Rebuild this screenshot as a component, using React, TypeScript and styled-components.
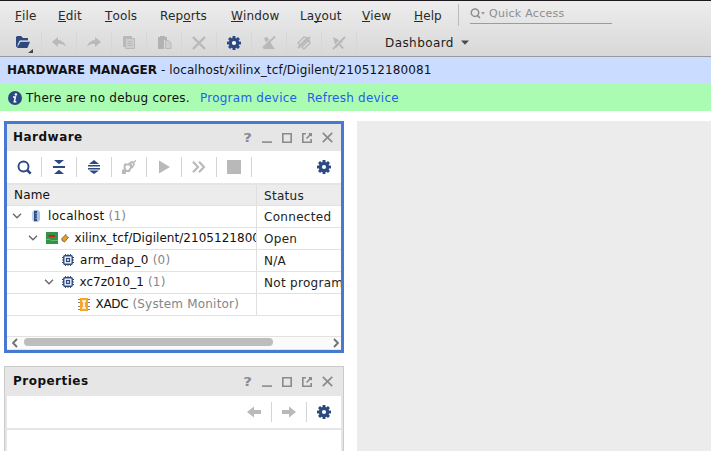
import React from 'react';
import styled, { createGlobalStyle } from 'styled-components';

const NAVY = '#2c4a80';
const FAINT = '#b9b9b9';

const GlobalStyle = createGlobalStyle`
  * { box-sizing: border-box; }
  html, body { margin: 0; padding: 0; overflow: hidden; background: #fff; }
  body {
    font-family: "DejaVu Sans", Verdana, sans-serif;
    font-size: 12px;
    color: #111;
    white-space: pre;
  }
  svg { display: block; flex: none; }
`;

const Window = styled.div`
  width: 711px;
  height: 451px;
  overflow: hidden;
  display: flex;
  flex-direction: column;
`;

const TopChrome = styled.header`
  height: 57px;
  flex: none;
  border-top: 1px solid #1d191c;
  border-bottom: 1px solid #999;
  background: linear-gradient(#ededed, #d8d8d8);
`;

const MenuBar = styled.nav`
  height: 29px;
  display: flex;
  align-items: flex-start;
  padding-left: 15px;
  letter-spacing: 0.12px;
`;

const MenuItem = styled.span<{ $width: number }>`
  width: ${p => p.$width}px;
  flex: none;
  line-height: 16px;
  padding-top: 7px;
  color: #292929;
`;

const Mnemonic = styled.span`
  display: inline-block;
  height: 14px;
  line-height: 16px;
  border-bottom: 1px solid #292929;
`;

const MenuDivider = styled.span`
  width: 1px;
  height: 22px;
  margin-top: 3px;
  background: #bcbcbc;
`;

const QuickAccess = styled.div`
  width: 142px;
  height: 20px;
  margin: 3px 0 0 11px;
  display: flex;
  align-items: center;
  gap: 4px;
  border-bottom: 1px solid #9c9c9c;
  color: #8d8d8d;
  font-size: 11px;
  letter-spacing: 0.27px;
`;

const ToolStrip = styled.div`
  height: 25px;
  padding-left: 7px;
  display: flex;
  align-items: center;
`;

const ToolCell = styled.span<{ $line?: string; $tall?: boolean }>`
  width: 35px;
  height: ${p => (p.$tall ? 22 : 20)}px;
  flex: none;
  display: flex;
  align-items: center;
  justify-content: center;
  border-right: 1px solid ${p => p.$line ?? '#d4d4d4'};
`;

const GearCell = styled.span`
  width: 34px;
  flex: none;
  display: flex;
  justify-content: center;
`;

const LayoutChooser = styled.div`
  display: flex;
  align-items: center;
  gap: 7px;
  margin-left: 28px;
  letter-spacing: 0.42px;
  color: #1c1c1c;
`;

const ManagerBar = styled.div`
  height: 27px;
  flex: none;
  padding: 0 7px;
  line-height: 26px;
  letter-spacing: 0.11px;
  background: #cadcff;
`;

const ManagerName = styled.b`
  letter-spacing: 0;
`;

const NoticeBar = styled.div`
  height: 27px;
  flex: none;
  display: flex;
  align-items: center;
  padding-left: 8px;
  letter-spacing: 0.24px;
  background: #aafcb2;
`;

const NoticeText = styled.span`
  width: 174px;
  margin-left: 4px;
`;

const NoticeLink = styled.a<{ $width: number }>`
  width: ${p => p.$width}px;
  color: #2360ea;
`;

const Workspace = styled.main`
  flex: 1;
  min-height: 0;
  display: flex;
  gap: 13px;
  padding: 10px 0 0 4px;
`;

const Sidebar = styled.div`
  width: 340px;
  flex: none;
  display: flex;
  flex-direction: column;
  gap: 13px;
`;

const Canvas = styled.section`
  flex: 1;
  background: #ececec;
`;

const Panel = styled.section<{ $active?: boolean }>`
  flex: none;
  height: ${p => (p.$active ? 232 : 130)}px;
  border: ${p => (p.$active ? '3px solid #4679cf' : '1px solid #cacaca')};
  padding: ${p => (p.$active ? 0 : '0 2px')};
  background: ${p => (p.$active ? '#fff' : '#e6e6e6')};
  display: flex;
  flex-direction: column;
`;

const PanelHeader = styled.div<{ $height: number }>`
  height: ${p => p.$height}px;
  flex: none;
  display: flex;
  align-items: center;
  padding: 0 4px 0 6px;
  background: #e6e6e6;
`;

const PanelTitle = styled.strong`
  flex: 1;
  padding-bottom: 2px;
  letter-spacing: 0.48px;
`;

const TitleButton = styled.span`
  width: 20px;
  display: flex;
  justify-content: center;
`;

const PanelTools = styled.div<{ $end?: boolean }>`
  height: 34px;
  flex: none;
  display: flex;
  align-items: center;
  justify-content: ${p => (p.$end ? 'flex-end' : 'flex-start')};
  background: #fff;
  border-bottom: 2px solid #e5e5e5;
`;

const Spacer = styled.span`
  flex: 1;
`;

const PanelBody = styled.div`
  flex: 1;
  background: #fff;
`;

const TreeRow = styled.div<{ $head?: boolean }>`
  height: ${p => (p.$head ? 21 : 22)}px;
  flex: none;
  display: grid;
  grid-template-columns: 250px 84px;
  background: ${p => (p.$head ? '#ececec' : '#fff')};
  border-bottom: 1px solid #e2e2e2;
`;

const NameCell = styled.div<{ $indent: number; $tracking: number }>`
  display: flex;
  align-items: center;
  overflow: hidden;
  padding: 0 0 1px ${p => p.$indent}px;
  border-right: 1px solid #dfdfdf;
  letter-spacing: ${p => p.$tracking}px;
`;

const StatusCell = styled.div`
  overflow: hidden;
  padding: 1px 0 0 7px;
  line-height: 20px;
  letter-spacing: 0.3px;
  color: #222;
`;

const Twisty = styled.span<{ $space: number }>`
  width: ${p => p.$space}px;
  flex: none;
`;

const NodeIcon = styled.span<{ $space: number }>`
  width: ${p => p.$space}px;
  flex: none;
  display: flex;
  align-items: center;
  gap: 3px;
`;

const Muted = styled.span`
  color: #858585;
  letter-spacing: 0.2px;
`;

const EmptyRow = styled.div`
  height: 21px;
  flex: none;
  border-bottom: 1px solid #e2e2e2;
`;

const ScrollTrack = styled.div`
  height: 13px;
  display: flex;
  align-items: center;
  padding: 0 2px 0 5px;
  background: #fafafa;
  border-bottom: 1px solid #e6e6e6;
`;

const ScrollThumb = styled.div`
  width: 249px;
  height: 8px;
  margin: -2px auto 0 6px;
  border-radius: 4px;
  background: #bdbdbd;
`;

const Gear = () => (
  <svg width="14" height="14" viewBox="0 0 14 14">
    <g fill={NAVY}>
      {[0, 45, 90, 135].map(a => (
        <rect key={a} x="5.5" y="0" width="3" height="14" rx=".5" transform={`rotate(${a} 7 7)`} />
      ))}
      <circle cx="7" cy="7" r="5.2" />
    </g>
    <circle cx="7" cy="7" r="2.1" fill="#fff" />
  </svg>
);

const OpenFolder = () => (
  <svg width="18" height="20" viewBox="0 0 18 20">
    <path d="M1 14V4.5Q1 3 2.5 3H6l2 2h5v3H5.2L3 13.5Z" fill={NAVY} />
    <path d="M5.5 8.7H15L12.4 15H2Z" fill={NAVY} />
    <path d="M2.8 12.5 4.8 7.9H13" fill="none" stroke="#dedede" />
    <path d="M18 16v4h-5Z" fill="#444" />
  </svg>
);

const Redo = ({ back }: { back?: boolean }) => (
  <svg width="14" height="11" viewBox="0 0 14 11">
    <path transform={back ? 'matrix(-1 0 0 1 14 0)' : undefined} fill={FAINT}
      d="M8 0l6 5-6 5V7Q4 5.8 0 9.5 2 3.5 8 3Z" />
  </svg>
);

const CopyPages = () => (
  <svg width="14" height="15" viewBox="0 0 14 15">
    <path d="M1 1h9v3H4v8H1Z" fill={FAINT} />
    <path d="M3.5 3.5h9v10h-9Z" fill="#cecece" stroke={FAINT} />
    <path d="M5.5 6.5h5M5.5 8.5h5M5.5 10.5h5" stroke={FAINT} />
  </svg>
);

const Paste = () => (
  <svg width="15" height="15" viewBox="0 0 15 15">
    <path d="M1 2h2V1h5v1h2v3H7v9H1Z" fill="#b2b2b2" />
    <path d="M8.5 5.5h3l2.5 2.5v5.5H8.5Z" fill="#cecece" stroke={FAINT} />
  </svg>
);

const Cross = ({ size, color, weight }: { size: number; color: string; weight: number }) => (
  <svg width={size} height={size} viewBox="0 0 14 14">
    <path d="m1 1 12 12M13 1 1 13" stroke={color} strokeWidth={weight} />
  </svg>
);

const DisabledEdit = () => (
  <svg width="14" height="14" viewBox="0 0 14 14" fill={FAINT}>
    <path d="M2 2l3-1 3 4 2 4 3 4H1l2-3 2-1Z" />
    <path d="M1 11.5 13 .5" stroke={FAINT} strokeWidth="2" />
    <path d="M1 9.5 11 .5" stroke="#ddd" />
  </svg>
);

const DisabledTag = () => (
  <svg width="14" height="14" viewBox="0 0 14 14" fill="none" stroke={FAINT}>
    <path d="M1 7 7 1l3 1-7 7ZM5 11l7-7 1 3-6 6Z" strokeWidth="1.4" />
    <path d="M1 12 13 1" strokeWidth="2" />
  </svg>
);

const DisabledPointer = () => (
  <svg width="14" height="14" viewBox="0 0 14 14" fill={FAINT}>
    <path d="M1 1l10 5-3 1.5L12 12l-2 1-3-4-3 3Z" />
    <path d="M1 13 13 1" stroke={FAINT} strokeWidth="2" />
    <path d="M1 11 11 1" stroke="#ddd" />
  </svg>
);

const Magnifier = () => (
  <svg width="15" height="15" viewBox="0 0 15 15" fill="none" stroke={NAVY}>
    <circle cx="6.5" cy="6.5" r="5" strokeWidth="1.9" />
    <path d="m10 10 3.7 3.7" strokeWidth="2.5" />
  </svg>
);

const FilterGlyph = () => (
  <svg width="15" height="11" viewBox="0 0 15 11" fill="none" stroke="#8d8d8d">
    <circle cx="5" cy="4.7" r="3.7" strokeWidth="1.5" />
    <path d="m7 7 3 3" strokeWidth="1.7" />
    <path d="M11 4.2h4L13 6.5Z" fill="#8d8d8d" stroke="none" />
  </svg>
);

const CollapseAll = () => (
  <svg width="12" height="14" viewBox="0 0 12 14" fill={NAVY}>
    <path d="M1 0h10L6 4.3ZM0 6h12v2H0ZM6 9.7l5 4.3H1Z" />
  </svg>
);

const ExpandAll = () => (
  <svg width="12" height="14" viewBox="0 0 12 14" fill={NAVY}>
    <path d="M6 0l5 4H1ZM0 5h12v1.5H0ZM0 8h12v1.5H0ZM1 10.5h10L6 14Z" />
  </svg>
);

const Connect = () => (
  <svg width="14" height="14" viewBox="0 0 14 14" fill="none" stroke={FAINT}>
    <path d="M3 4.5h6v3l-2 3.5H4L2.5 8Z" strokeWidth="2" />
    <path d="M6.5 4 10 1.8 12.2 4 9.8 8M11.5 2.5 14 .5" strokeWidth="1.5" />
    <path d="M0 9.5h4V14H0Z" fill={FAINT} stroke="none" />
  </svg>
);

const Play = () => (
  <svg width="12" height="14" viewBox="0 0 12 14">
    <path d="M1 0.5v13L12 7Z" fill={FAINT} />
  </svg>
);

const FastForward = () => (
  <svg width="14" height="12" viewBox="0 0 14 12" fill="none" stroke={FAINT} strokeWidth="2.1">
    <path d="m1 .8 5 5.2-5 5.2M7 .8l5 5.2-5 5.2" />
  </svg>
);

const Stop = () => (
  <svg width="14" height="14" viewBox="0 0 14 14">
    <path d="M0 0h14v14H0Z" fill={FAINT} />
  </svg>
);

const StepArrow = ({ back }: { back?: boolean }) => (
  <svg width="14" height="12" viewBox="0 0 14 12">
    <path transform={back ? 'matrix(-1 0 0 1 14 0)' : undefined} d="M0 4h7V.5L14 6l-7 5.5V8H0Z" fill={FAINT} />
  </svg>
);

const HelpMark = styled.b`
  font-size: 12px;
  line-height: 16px;
  color: #8b8b8b;
  transform: scaleX(1.25);
`;

const WindowGlyph = ({ path }: { path: string }) => (
  <svg width="10" height="10" viewBox="0 0 10 10">
    <path d={path} fill="none" stroke="#8b8b8b" strokeWidth="1.6" />
  </svg>
);

const TitleButtons = () => (
  <>
    <TitleButton><HelpMark>?</HelpMark></TitleButton>
    <TitleButton><WindowGlyph path="M0 9.1h10" /></TitleButton>
    <TitleButton><WindowGlyph path="M.8.8h8.4v8.4H.8Z" /></TitleButton>
    <TitleButton><WindowGlyph path="M4 .8H.8v8.4h8.4V6M4.5 5.5 9.3.7M6.8.8h2.4v2.4" /></TitleButton>
    <TitleButton><Cross size={11} color="#8b8b8b" weight={2.2} /></TitleButton>
  </>
);

const Chevron = () => (
  <svg width="10" height="6" viewBox="0 0 10 6">
    <path d="m1 .8 4 4 4-4" fill="none" stroke="#666" strokeWidth="1.3" />
  </svg>
);

const HostIcon = () => (
  <svg width="8" height="12" viewBox="0 0 8 12">
    <path d="M0 2 2 0v12L0 10Z" fill="#c4d3e9" />
    <path d="M2 0h4l2 2v8l-2 2H2Z" fill="#a9c1e4" />
    <path d="M2 1h3v10H2Z" fill={NAVY} />
    <path d="M3.5 3.5h1.5M3.5 6h1.5M3.5 8.5h1.5" stroke="#8ba7d2" />
  </svg>
);

const BoardIcon = () => (
  <svg width="12" height="12" viewBox="0 0 12 12">
    <path d="M0 0h12v12H0Z" fill="#329545" />
    <path d="M2.5 3H9v2H2.5Z" fill="#c81f24" />
    <path d="M0 7.5h4l1 1h7" fill="none" stroke="#65b46f" />
  </svg>
);

const PlugIcon = () => (
  <svg width="8" height="9" viewBox="0 0 9 10">
    <path d="M1 5 5 1l3 3-4 5-3-2Z" fill="#ed9e1c" stroke="#6e603f" />
    <path d="m5 1 1-1M8 4l1-1" stroke="#555" />
  </svg>
);

const ChipIcon = () => (
  <svg width="12" height="12" viewBox="0 0 12 12" fill="none" stroke={NAVY}>
    <path d="M3.5 0v2M6 0v2M8.5 0v2M3.5 10v2M6 10v2M8.5 10v2M0 3.5h2M0 6h2M0 8.5h2M10 3.5h2M10 6h2M10 8.5h2" />
    <rect x="1.8" y="1.8" width="8.4" height="8.4" rx="1" strokeWidth="1.4" />
    <rect x="4.5" y="4.5" width="3" height="3" strokeWidth="1.3" />
  </svg>
);

const MonitorIcon = () => (
  <svg width="12" height="13" viewBox="0 0 12 13">
    <path d="M0 1.5h12M0 4.5h12M0 8.5h12M0 11.5h12" stroke="#8a8170" />
    <path d="M2 0h8v13H2Z" fill="#f7a62d" />
    <path d="M4 3h4M4 10h4M6 3v7" stroke="#fff" strokeWidth="1.7" />
  </svg>
);

const InfoIcon = () => (
  <svg width="14" height="14" viewBox="0 0 14 14">
    <circle cx="7" cy="7" r="7" fill={NAVY} />
    <circle cx="7.9" cy="3.5" r="1.2" fill="#fff" />
    <path d="M5 6h2.4L6.3 10.8h2" fill="none" stroke="#fff" strokeWidth="1.5" />
  </svg>
);

const ScrollArrow = ({ right }: { right?: boolean }) => (
  <svg width="6" height="10" viewBox="0 0 6 10">
    <path d={right ? 'm1 1 4 4-4 4' : 'M5 1 1 5l4 4'} fill="none" stroke="#707070" strokeWidth="1.9" />
  </svg>
);

const menus: [string, string, string, number][] = [
  ['', 'F', 'ile', 43], ['', 'E', 'dit', 47], ['', 'T', 'ools', 55], ['Rep', 'o', 'rts', 71],
  ['', 'W', 'indow', 69], ['La', 'y', 'out', 62], ['', 'V', 'iew', 52], ['', 'H', 'elp', 44],
];

const mainTools = [
  <OpenFolder />, <Redo back />, <Redo />, <CopyPages />, <Paste />,
  <Cross size={14} color={FAINT} weight={2.4} />, <Gear />, <DisabledEdit />, <DisabledTag />, <DisabledPointer />,
];

const hardwareTools = [<Magnifier />, <CollapseAll />, <ExpandAll />, <Connect />, <Play />, <FastForward />, <Stop />];

type Node = {
  indent: number; open?: boolean; twisty: number; icon: React.ReactNode; space: number;
  name: string; tracking: number; note?: string; status: string;
};

const nodes: Node[] = [
  { indent: 5, open: true, twisty: 20, icon: <HostIcon />, space: 16, name: 'localhost', tracking: 0.3, note: '(1)', status: 'Connected' },
  { indent: 21, open: true, twisty: 18, icon: <><BoardIcon /><PlugIcon /></>, space: 28.5, name: 'xilinx_tcf/Digilent/210512180081', tracking: 0.04, status: 'Open' },
  { indent: 37, twisty: 18, icon: <ChipIcon />, space: 18, name: 'arm_dap_0', tracking: 0.3, note: '(0)', status: 'N/A' },
  { indent: 37, open: true, twisty: 18, icon: <ChipIcon />, space: 17.5, name: 'xc7z010_1', tracking: 0.05, note: '(1)', status: 'Not programmed' },
  { indent: 53, twisty: 18, icon: <MonitorIcon />, space: 17.5, name: 'XADC', tracking: -0.3, note: '(System Monitor)', status: '' },
];

export default function App() {
  return (
    <Window>
      <GlobalStyle />
      <TopChrome>
        <MenuBar>
          {menus.map(([before, key, after, width]) => (
            <MenuItem key={before + key + after} $width={width}>{before}<Mnemonic>{key}</Mnemonic>{after}</MenuItem>
          ))}
          <MenuDivider />
          <QuickAccess><FilterGlyph />Quick Access</QuickAccess>
        </MenuBar>
        <ToolStrip>
          {mainTools.map((icon, i) => <ToolCell key={i} $tall $line="#d7d7d7">{icon}</ToolCell>)}
          <LayoutChooser>
            Dashboard
            <svg width="8" height="5" viewBox="0 0 8 5"><path d="M0 .5h8L4 4.8Z" fill="#4a4a4a" /></svg>
          </LayoutChooser>
        </ToolStrip>
      </TopChrome>
      <ManagerBar><ManagerName>HARDWARE MANAGER</ManagerName> - localhost/xilinx_tcf/Digilent/210512180081</ManagerBar>
      <NoticeBar>
        <InfoIcon />
        <NoticeText>There are no debug cores.</NoticeText>
        <NoticeLink $width={107}>Program device</NoticeLink>
        <NoticeLink $width={100}>Refresh device</NoticeLink>
      </NoticeBar>
      <Workspace>
        <Sidebar>
          <Panel $active>
            <PanelHeader $height={27}><PanelTitle>Hardware</PanelTitle><TitleButtons /></PanelHeader>
            <PanelTools>
              {hardwareTools.map((icon, i) => <ToolCell key={i}>{icon}</ToolCell>)}
              <Spacer />
              <GearCell><Gear /></GearCell>
            </PanelTools>
            <TreeRow $head><NameCell $indent={7} $tracking={0.2}>Name</NameCell><StatusCell>Status</StatusCell></TreeRow>
            {nodes.map(n => (
              <TreeRow key={n.name}>
                <NameCell $indent={n.indent} $tracking={n.tracking}>
                  <Twisty $space={n.twisty}>{n.open && <Chevron />}</Twisty>
                  <NodeIcon $space={n.space}>{n.icon}</NodeIcon>
                  {n.name}{n.note && <Muted> {n.note}</Muted>}
                </NameCell>
                <StatusCell>{n.status}</StatusCell>
              </TreeRow>
            ))}
            <EmptyRow />
            <ScrollTrack><ScrollArrow /><ScrollThumb /><ScrollArrow right /></ScrollTrack>
          </Panel>
          <Panel>
            <PanelHeader $height={29}><PanelTitle>Properties</PanelTitle><TitleButtons /></PanelHeader>
            <PanelTools $end>
              <ToolCell><StepArrow back /></ToolCell>
              <ToolCell><StepArrow /></ToolCell>
              <GearCell><Gear /></GearCell>
            </PanelTools>
            <PanelBody />
          </Panel>
        </Sidebar>
        <Canvas />
      </Workspace>
    </Window>
  );
}
